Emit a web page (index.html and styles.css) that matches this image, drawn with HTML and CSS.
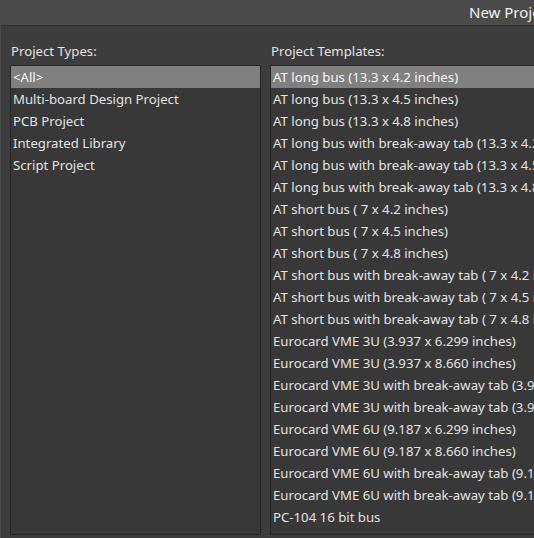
FILE: index.html
```html
<!DOCTYPE html>
<html>
<head>
<meta charset="utf-8">
<link rel="stylesheet" href="styles.css">
</head>
<body>
<div class="window">
  <div class="titlebar"><span class="title">New Project</span></div>
  <div class="content">
    <div class="column left">
      <div class="label">Project Types:</div>
      <div class="list">
        <div class="row selected">&lt;All&gt;</div>
        <div class="row">Multi-board Design Project</div>
        <div class="row">PCB Project</div>
        <div class="row">Integrated Library</div>
        <div class="row">Script Project</div>
      </div>
    </div>
    <div class="column right">
      <div class="label">Project Templates:</div>
      <div class="list">
        <div class="row selected">AT long bus (13.3 x 4.2 inches)</div>
        <div class="row">AT long bus (13.3 x 4.5 inches)</div>
        <div class="row">AT long bus (13.3 x 4.8 inches)</div>
        <div class="row">AT long bus with break-away tab (13.3 x 4.2 inches)</div>
        <div class="row">AT long bus with break-away tab (13.3 x 4.5 inches)</div>
        <div class="row">AT long bus with break-away tab (13.3 x 4.8 inches)</div>
        <div class="row">AT short bus ( 7 x 4.2 inches)</div>
        <div class="row">AT short bus ( 7 x 4.5 inches)</div>
        <div class="row">AT short bus ( 7 x 4.8 inches)</div>
        <div class="row">AT short bus with break-away tab ( 7 x 4.2 inches)</div>
        <div class="row">AT short bus with break-away tab ( 7 x 4.5 inches)</div>
        <div class="row">AT short bus with break-away tab ( 7 x 4.8 inches)</div>
        <div class="row">Eurocard VME 3U (3.937 x 6.299 inches)</div>
        <div class="row">Eurocard VME 3U (3.937 x 8.660 inches)</div>
        <div class="row">Eurocard VME 3U with break-away tab (3.937 x 6.299 inches)</div>
        <div class="row">Eurocard VME 3U with break-away tab (3.937 x 8.660 inches)</div>
        <div class="row">Eurocard VME 6U (9.187 x 6.299 inches)</div>
        <div class="row">Eurocard VME 6U (9.187 x 8.660 inches)</div>
        <div class="row">Eurocard VME 6U with break-away tab (9.187 x 6.299 inches)</div>
        <div class="row">Eurocard VME 6U with break-away tab (9.187 x 8.660 inches)</div>
        <div class="row">PC-104 16 bit bus</div>
      </div>
    </div>
  </div>
</div>
</body>
</html>
```
FILE: styles.css
```css
html, body {
  margin: 0;
  padding: 0;
  background: #3d3d3d;
  overflow: hidden;
}
body {
  width: 534px;
  height: 538px;
  font-family: "Noto Sans", "Open Sans", sans-serif;
  font-size: 13.2px;
  color: #e2e2e2;
}
.window {
  width: 534px;
  height: 538px;
  border-left: 1px solid #4c4c4c;
  box-sizing: border-box;
  overflow: hidden;
}
.titlebar {
  height: 25px;
  background: #4b4b4b;
  border-bottom: 1px solid #2f2f2f;
  position: relative;
}
.title {
  position: absolute;
  left: 468px;
  top: 2px;
  font-size: 15px;
  color: #f2f2f2;
  white-space: nowrap;
}
.content {
  display: grid;
  grid-template-columns: 251px 300px;
  column-gap: 9px;
  padding-left: 9px;
  padding-top: 16px;
}
.label {
  height: 23px;
  line-height: 18px;
  padding-left: 1px;
  white-space: nowrap;
}
.list {
  height: 470px;
  box-sizing: border-box;
  background: #383838;
  border: 1px solid #252525;
  overflow: hidden;
}
.row {
  height: 22px;
  box-sizing: border-box;
  padding-top: 1px;
  line-height: 21px;
  white-space: nowrap;
  padding-left: 2px;
}
.row.selected {
  background: #808080;
  color: #f6f6f6;
}
```
